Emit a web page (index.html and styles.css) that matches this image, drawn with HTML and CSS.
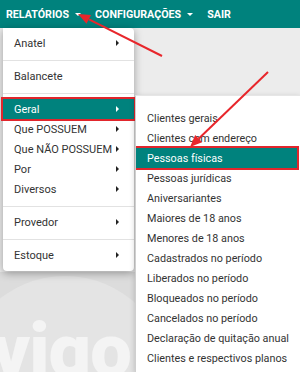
FILE: index.html
```html
<!DOCTYPE html>
<html lang="pt-BR">
<head>
<meta charset="utf-8">
<link rel="stylesheet" href="styles.css">
</head>
<body>
<header class="navbar">
  <a class="nav-link">RELATÓRIOS <span class="caret"></span></a>
  <a class="nav-link">CONFIGURAÇÕES <span class="caret"></span></a>
  <a class="nav-link">SAIR</a>
</header>
<main class="page">
  <div class="watermark">
    <div class="circle"></div>
    <span class="logo-text">vigo</span>
  </div>

  <ul class="dropdown">
    <li class="item">Anatel<span class="arrow"></span></li>
    <li class="divider"></li>
    <li class="item">Balancete</li>
    <li class="divider"></li>
    <li class="item active">Geral<span class="arrow"></span></li>
    <li class="item">Que POSSUEM<span class="arrow"></span></li>
    <li class="item">Que NÃO POSSUEM<span class="arrow"></span></li>
    <li class="item">Por<span class="arrow"></span></li>
    <li class="item">Diversos<span class="arrow"></span></li>
    <li class="divider"></li>
    <li class="item">Provedor<span class="arrow"></span></li>
    <li class="divider"></li>
    <li class="item">Estoque<span class="arrow"></span></li>
  </ul>

  <ul class="submenu">
    <li class="sub-item">Clientes gerais</li>
    <li class="sub-item">Clientes com endereço</li>
    <li class="sub-item active">Pessoas físicas</li>
    <li class="sub-item">Pessoas jurídicas</li>
    <li class="sub-item">Aniversariantes</li>
    <li class="sub-item">Maiores de 18 anos</li>
    <li class="sub-item">Menores de 18 anos</li>
    <li class="sub-item">Cadastrados no período</li>
    <li class="sub-item">Liberados no período</li>
    <li class="sub-item">Bloqueados no período</li>
    <li class="sub-item">Cancelados no período</li>
    <li class="sub-item">Declaração de quitação anual</li>
    <li class="sub-item">Clientes e respectivos planos</li>
  </ul>
</main>
<svg class="annotations" width="300" height="372" viewBox="0 0 300 372">
  <line x1="162" y1="56" x2="89" y2="19.4" stroke="#e8262b" stroke-width="2"/>
  <polygon points="78,14 91,14.9 86.5,23.8" fill="#e8262b"/>
  <line x1="268" y1="72" x2="198.6" y2="138.7" stroke="#e8262b" stroke-width="2"/>
  <polygon points="190,147 202.1,142.3 195.2,135.1" fill="#e8262b"/>
</svg>
</body>
</html>
```
FILE: styles.css
```css
* { box-sizing: border-box; }
html, body {
  margin: 0;
  padding: 0;
  width: 300px;
  height: 372px;
  overflow: hidden;
  font-family: Roboto, "Liberation Sans", Arial, sans-serif;
}
body { position: relative; background: #ececec; }

.navbar {
  height: 28px;
  background: #00827d;
  display: flex;
  align-items: center;
  gap: 14px;
  padding-left: 6px;
}
.nav-link {
  color: #fff;
  font-weight: 700;
  font-size: 10.7px;
  display: flex;
  align-items: center;
  gap: 4px;
}
.caret {
  width: 0; height: 0;
  border-left: 3px solid transparent;
  border-right: 3px solid transparent;
  border-top: 3px solid #fff;
  margin-left: 2px;
}

.page {
  position: relative;
  height: 344px;
  background: #ececec;
  display: flex;
  flex-direction: column;
  justify-content: flex-end;
}

.watermark {
  position: relative;
  height: 100px;
  background: #dcdcdc;
  overflow: hidden;
}
.circle {
  position: absolute;
  left: -40px;
  top: 4px;
  width: 210px;
  height: 210px;
  border-radius: 50%;
  background: #e4e4e4;
}
.logo-text {
  position: absolute;
  left: -8px;
  top: 42px;
  font-family: Roboto, sans-serif;
  font-weight: 900;
  font-size: 74px;
  line-height: 1;
  color: #f4f4f4;
  letter-spacing: -1px;
}

.dropdown {
  position: absolute;
  left: 3px;
  top: 0;
  width: 131px;
  margin: 0;
  padding: 5px 0 6px;
  list-style: none;
  background: #fff;
  border-radius: 0 4px 4px 4px;
  box-shadow: 0 2px 8px rgba(0,0,0,0.35);
}
.item {
  height: 20px;
  display: flex;
  align-items: center;
  justify-content: space-between;
  padding: 0 15px 0 11px;
  font-size: 11px;
  color: #333;
  white-space: nowrap;
}
.arrow {
  width: 0; height: 0;
  border-top: 3px solid transparent;
  border-bottom: 3px solid transparent;
  border-left: 3px solid #222;
}
.item.active {
  background: #00827d;
  color: #fff;
  outline: 2px solid #e1262c;
}
.item.active .arrow { border-left-color: #fff; }
.divider {
  height: 1px;
  background: #e2e2e2;
  margin: 7px 0 5px;
}

.submenu {
  position: absolute;
  left: 135px;
  top: 67px;
  right: 0;
  bottom: 0;
  margin: 0;
  padding: 12px 0 0;
  list-style: none;
  background: #fff;
  border-left: 1px solid #cfcfcf;
  border-top: 1px solid #e6e6e6;
  box-shadow: 0 2px 6px rgba(0,0,0,0.2);
  overflow: hidden;
}
.sub-item {
  height: 20px;
  display: flex;
  align-items: center;
  padding-left: 11px;
  font-size: 10.8px;
  color: #333;
  white-space: nowrap;
}
.sub-item.active {
  background: #00827d;
  color: #fff;
  outline: 2px solid #e1262c;
  outline-offset: -2px;
  margin-left: -2px;
  padding-left: 13px;
  margin-right: 1px;
  height: 24px;
  margin-top: -2px;
  margin-bottom: -2px;
}

.annotations {
  position: absolute;
  left: 0;
  top: 0;
  pointer-events: none;
}
```
